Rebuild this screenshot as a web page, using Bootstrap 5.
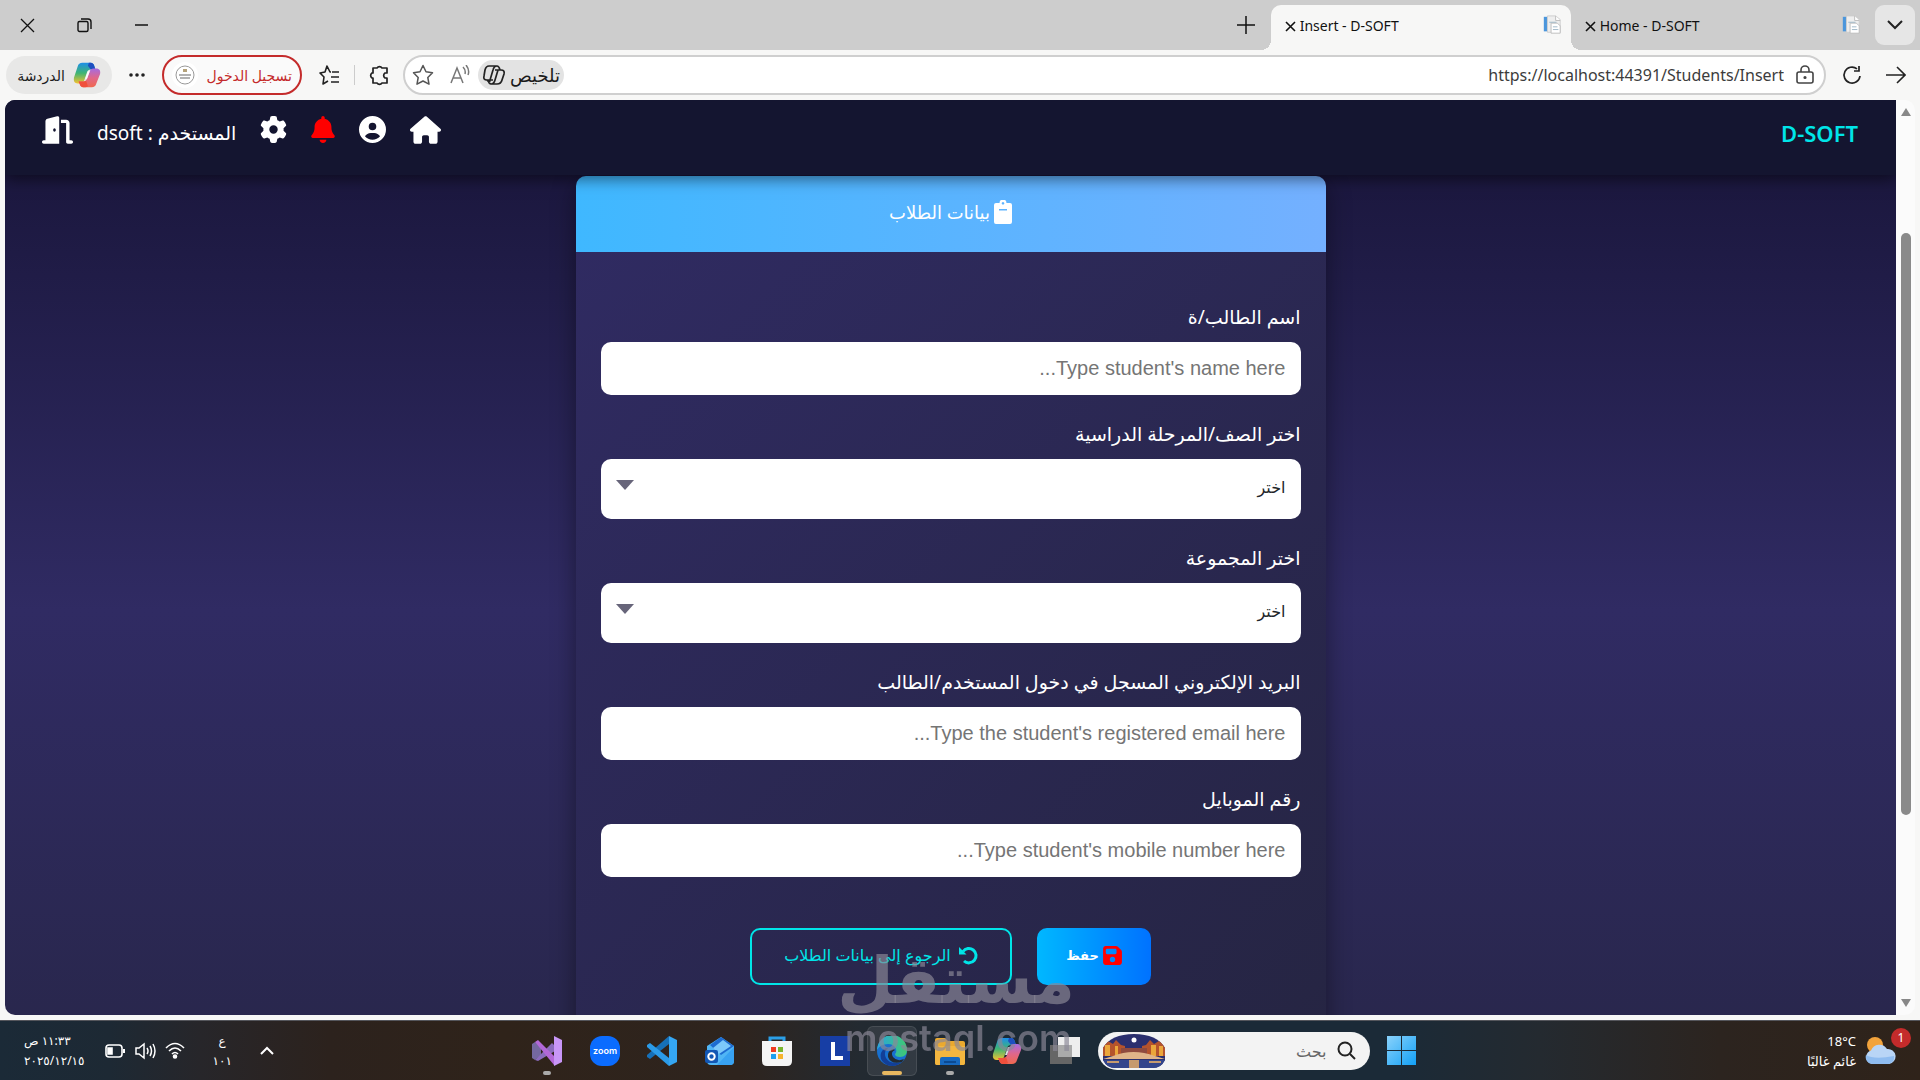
<!DOCTYPE html>
<html lang="ar" dir="rtl">
<head>
<meta charset="utf-8">
<meta name="viewport" content="width=device-width, initial-scale=1">
<title>Insert - D-SOFT</title>
<link href="https://cdn.jsdelivr.net/npm/bootstrap@5.3.0/dist/css/bootstrap.min.css" rel="stylesheet">
<style>
  :root { --ui: "Noto Sans", "DejaVu Sans", sans-serif; --cyan: #00e5e8; }
  body { font-family: var(--ui); height: 100vh; overflow: hidden; background: #f7f7f6; color: #1b1b1b; }
  svg { display: block; flex: none; }
  button { font-family: inherit; }
  .plain { background: none; border: 0; padding: 0; color: inherit; }

  /* tab strip */
  .tabstrip { height: 50px; background: #cdcdcd; padding-inline: 5px 20px; }
  .tab-item { width: 304px; height: 40px; font-size: 14px; padding-inline: 14px; color: #111; }
  .tab-on { width: 300px; height: 45px; background: #f7f7f6; border-radius: 10px 10px 0 0; margin-top: 5px; padding-inline: 9px 14px; padding-bottom: 5px; position: relative; }
  .tab-on::before, .tab-on::after { content: ""; position: absolute; bottom: 0; width: 10px; height: 10px; }
  .tab-on::before { left: -10px; background: radial-gradient(circle at 0 0, transparent 10px, #f7f7f6 10px); }
  .tab-on::after { right: -10px; background: radial-gradient(circle at 100% 0, transparent 10px, #f7f7f6 10px); }
  .tab-menu { width: 40px; height: 40px; border-radius: 9px; background: #e6e6e6; }
  .win-ctl { gap: 42px; }

  /* address row */
  .toolrow { height: 50px; padding-inline: 14px 6px; }
  .omni { height: 40px; margin-left: 14px; border: 2px solid #cfcfcf; border-radius: 20px; background: #fff; padding-inline: 10px 7px; }
  .omni input { border: 0; outline: 0; background: none; font: 16px/24px var(--ui); color: #3c3c3c; min-width: 0; text-align: right; margin-right: 10px; }
  .sum-pill { height: 30px; border-radius: 15px; background: #e3e3e3; padding-inline: 4px; font-size: 18px; }
  .login-pill { width: 140px; height: 40px; border: 2px solid #c42b2b; border-radius: 20px; color: #c42b2b; font-size: 14px; background: #fafafa; }
  .login-pic { width: 26px; height: 26px; border-radius: 50%; background: #fff; }
  .chat-pill { width: 106px; height: 38px; border-radius: 19px; background: #e8e8e7; font-size: 14px; }
  .v-rule { width: 1px; height: 20px; background: #ccc; margin-inline: 14px; }

  /* web page */
  .view-wrap { min-height: 0; padding: 0 5px 5px; }
  .view { border-radius: 0 0 0 10px; border-top-left-radius: 10px; overflow: hidden; background: linear-gradient(#0f0c29, #302b63, #24243e) 0 -183px / 100% 1388px no-repeat; }
  .topnav { height: 75px; background: #141530; padding: 16px 38px 0 37px; box-shadow: 0 4px 14px rgba(0,0,0,.5); position: relative; z-index: 2; color: #fff; align-items: flex-start; }
  .brand { color: var(--cyan); font: 600 22px/34px "Noto Sans", sans-serif; text-decoration: none; }
  .topnav a svg { fill: #fff; }
  .topnav a.alerts svg { fill: #f00; }
  .who { font-size: 19px; line-height: 34px; }
  .form-panel { width: 750px; max-width: 100%; min-height: 1100px; margin-top: 1px; border-radius: 10px; background: linear-gradient(135deg, #302b63, #24243e); box-shadow: 0 8px 25px rgba(0,0,0,.4); }
  .panel-top { height: 76px; border-radius: 10px 10px 0 0; background: linear-gradient(90deg, #3fb8ff, #74b0ff); padding-top: 24px; color: #fff; font-size: 18px; line-height: 24px; }
  .panel-main { padding: 54px 25px 0; }
  .field { margin-bottom: 28px; }
  .field label { display: block; color: #fff; font-size: 19px; line-height: 22px; margin-bottom: 14px; }
  .field .form-control, .field .form-select { border: 0; border-radius: 10px; padding: 0 15px; background: #fff; color: #212529; }
  .field .form-control { height: 53px; font: 20px "Liberation Sans", sans-serif; }
  .field .form-control::placeholder { color: #757575; }
  .field .form-select { height: 60px; font-size: 16px; padding-bottom: 4px; }
  .pick { position: relative; }
  .pick::after { content: ""; position: absolute; left: 15px; top: 21px; border: 9px solid transparent; border-top: 10px solid #67657a; border-bottom: 0; pointer-events: none; }
  .act { height: 57px; border-radius: 10px; font-size: 16px; line-height: 24px; border: 0; padding-bottom: 4px; }
  .act-save { width: 114px; color: #fff; font-size: 13px; font-weight: 700; background: linear-gradient(90deg, #00b8ff, #0072ff); }
  .act-back { width: 262px; color: var(--cyan); border: 2px solid var(--cyan); background: none; }
  .act-row { margin-top: 51px; gap: 25px; }
  .sbar { width: 19px; background: #fbfbfb; border-radius: 0 10px 10px 0; padding: 8px 0; }
  .sbar-track { padding: 117px 0 0; }
  .sbar-thumb { width: 10px; height: 76%; border-radius: 5px; background: #8a8a8a; }

  /* taskbar */
  .taskrow { height: 60px; color: #fff; border-top: 1px solid #55565c; background: linear-gradient(90deg, #1b2a37 0, #1d2934 110px, #27262a 200px, #2c221d 330px, #2f231a 500px, #2e241e 740px, #232a31 860px, #1b2a37 1080px, #1b2a37 1400px, #242a30 1540px, #2c241f 1720px, #2f231a 1920px); }
  .weather { width: 504px; padding-inline-start: 24px; font-size: 13px; line-height: 20px; }
  .alert-dot { position: absolute; top: -7px; right: -15px; width: 20px; height: 20px; border-radius: 50%; background: #c42b2b; font-size: 12px; line-height: 20px; text-align: center; }
  .center-apps { width: 884px; }
  .app-list { width: 548px; }
  .searchbox { width: 272px; height: 38px; border-radius: 19px; background: #f3f3f3; padding-inline: 14px 5px; }
  .searchbox input { border: 0; outline: 0; background: none; font-size: 16px; min-width: 0; }
  .searchbox input::placeholder { color: #666; }
  .app { position: relative; width: 30px; height: 30px; }
  .app.run::after { content: ""; position: absolute; left: 11px; bottom: -9px; width: 8px; height: 4px; border-radius: 2px; background: #aaa; }
  .app.active::after { left: 5px; width: 20px; background: #e8b860; }
  .app.active::before { content: ""; position: absolute; inset: -10px; border-radius: 6px; background: rgba(255,255,255,.08); border: 1px solid rgba(255,255,255,.1); }
  .app svg { position: relative; }
  .tray { padding-inline-end: 24px; font-size: 12px; line-height: 20px; }
  .tray-sys { gap: 9px; }

  /* watermark over the page */
  .wmark { position: fixed; left: 845px; top: 943px; width: 230px; color: rgba(138,136,150,.68); pointer-events: none; z-index: 9; }
  .wmark-ar { font: 700 65px/76px "DejaVu Sans", sans-serif; }
  .wmark-en { font: 600 36px/38px "Inter", sans-serif; }
</style>
<script src="https://cdn.jsdelivr.net/npm/bootstrap@5.3.0/dist/js/bootstrap.bundle.min.js"></script>
</head>
<body class="d-flex flex-column">

<!-- shared shapes -->
<svg width="0" height="0" class="position-absolute" aria-hidden="true">
  <defs>
    <linearGradient id="cp1" x1="0" y1="0" x2="0" y2="1"><stop offset="0" stop-color="#1e8fe8"/><stop offset=".5" stop-color="#3fb573"/><stop offset="1" stop-color="#f3c130"/></linearGradient>
    <linearGradient id="cp2" x1="0" y1="0" x2="0" y2="1"><stop offset="0" stop-color="#a56be0"/><stop offset=".5" stop-color="#e0678a"/><stop offset="1" stop-color="#f0684f"/></linearGradient>
    <symbol id="copilot" viewBox="0 0 30 30">
      <path d="M10 2h9q3 0 4 4l1 3h-5q-3 0-4 3l-3 9q-1 3-4 3H5q-5 0-4-6L5 6q1-4 5-4z" fill="url(#cp1)"/>
      <path d="M17 2h2q3 0 4 4l1 3h-5l-3-4z" fill="#1d4fc0"/>
      <path d="M20 28h-9q-3 0-4-4l-1-2h5q3 0 4-3l3-8q1-3 4-3h4q4 1 3 6l-4 10q-1 4-5 4z" fill="url(#cp2)"/>
      <path d="M6 22h5q2 0 3-1l2 6q-1 1-3 1h-2q-3 0-4-4z" fill="#f0503c"/>
      <path d="M13 19l3-8h2l-3 8z" fill="#fff" opacity=".85"/>
    </symbol>
    <symbol id="docs" viewBox="0 0 22 22">
      <path d="M2 2h4v16H2z" fill="#4b96dc"/><path d="M6 1h9l5 4v14H6z" fill="#eee" stroke="#ccc"/><path d="M15 1v5h5" fill="#fff" stroke="#bbb"/><path d="M10 9h7l3 3v8H10z" fill="#fff" stroke="#bbb"/><path d="M8 8h8M12 13h5M12 16h6" stroke="#9ab4c4" fill="none"/>
    </symbol>
  </defs>
</svg>

<header class="flex-shrink-0">
  <div class="tabstrip d-flex align-items-center">
    <button class="plain tab-menu d-flex align-items-center justify-content-center" aria-label="Tabs"><svg width="16" height="10" fill="none" stroke="#222" stroke-width="2"><path d="M1 1l7 7 7-7"/></svg></button>
    <div class="tab-item d-flex align-items-center justify-content-between">
      <svg width="20" height="20"><use href="#docs"/></svg>
      <span dir="ltr"><button class="plain" aria-label="Close"><svg class="d-inline-block" width="11" height="11" stroke="#111" stroke-width="1.6"><path d="M1 1l9 9M10 1l-9 9"/></svg></button> Home - D-SOFT</span>
    </div>
    <div class="tab-item tab-on d-flex align-items-center justify-content-between">
      <svg width="20" height="20"><use href="#docs"/></svg>
      <span dir="ltr"><button class="plain" aria-label="Close"><svg class="d-inline-block" width="11" height="11" stroke="#111" stroke-width="1.6"><path d="M1 1l9 9M10 1l-9 9"/></svg></button> Insert - D-SOFT</span>
    </div>
    <button class="plain me-3" aria-label="New tab"><svg width="18" height="18" stroke="#111" stroke-width="1.5"><path d="M9 0v18M0 9h18"/></svg></button>
    <div class="win-ctl d-flex align-items-center me-auto">
      <button class="plain" aria-label="Minimize"><svg width="15" height="15" stroke="#111" stroke-width="1.5"><path d="M1 7h13"/></svg></button>
      <button class="plain" aria-label="Restore"><svg width="15" height="15" fill="none" stroke="#111" stroke-width="1.4"><rect x="1" y="3.500" width="10" height="10" rx="1.500"/><path d="M4 1h7q3 0 3 3v7"/></svg></button>
      <button class="plain" aria-label="Close"><svg width="15" height="15" stroke="#111" stroke-width="1.3"><path d="M1 1l13 13M14 1L1 14"/></svg></button>
    </div>
  </div>

  <div class="toolrow d-flex align-items-center">
    <button class="plain" aria-label="Forward"><svg width="20" height="18" fill="none" stroke="#222" stroke-width="1.6"><path d="M0 9h19M11 1l8 8-8 8"/></svg></button>
    <button class="plain me-4" aria-label="Reload"><svg width="20" height="20" fill="none" stroke="#222" stroke-width="1.7"><path d="M18 11a8 8 0 1 1-3-7.200M17 1v5h-5"/></svg></button>
    <div class="omni d-flex align-items-center flex-grow-1 me-3">
      <svg width="18" height="20" fill="none" stroke="#444" stroke-width="1.6"><rect x="1" y="7" width="16" height="11" rx="2"/><path d="M5 7V5a4 4 0 0 1 8 0v2"/><circle cx="9" cy="12.500" r=".8" fill="#444"/></svg>
      <input class="flex-grow-1" dir="ltr" type="text" aria-label="Address" value="https://localhost:44391/Students/Insert">
      <button class="plain sum-pill d-flex align-items-center gap-1">تلخيص
        <svg width="24" height="22" fill="none" stroke="#222" stroke-width="1.7"><path d="M7 2h8q2 0 3 4l1 0q4 0 3 4l-2 6q-1 4-5 4H9q-2 0-3-4H5q-4 0-3-4l1-6q1-4 4-4zM15 2q-3 0-4 4L8 16q0 4-3 0M9 20q3 0 4-4l3-10h3M13 6h4M6 16h5"/></svg></button>
      <svg class="me-2" width="20" height="20" fill="none" stroke="#777" stroke-width="1.500"><path d="M1 18L7 3l6 15M3 13h8M13 2q3 3 2 7M16 0q4 5 2 10"/></svg>
      <svg class="me-3" width="22" height="22" fill="none" stroke="#555" stroke-width="1.500" stroke-linejoin="round"><path d="M11 1.500l3 6.300 6.500 1-4.700 4.700 1.200 6.700-6-3.200-6 3.200 1.200-6.700L1.500 8.800l6.500-1z"/></svg>
    </div>
    <svg width="20" height="22" fill="none" stroke="#222" stroke-width="1.700" stroke-linejoin="round"><path d="M4 4h4a3 3 0 0 1 5 0h5v5h-2a3 3 0 0 0 0 5h2v5h-5a3 3 0 0 1-5 0H4v-5h-1a3 3 0 0 1 0-5h1z"/></svg>
    <span class="v-rule"></span>
    <svg width="22" height="22" fill="none" stroke="#222" stroke-width="1.600" stroke-linejoin="round"><path d="M13 8h-1L9 2 7 8l-5 1 4 4-1 7 5-3M14 8h7M13 13h8M13 18h8"/></svg>
    <button class="plain login-pill d-flex align-items-center justify-content-between me-3 ps-2 pe-2">
      <span>تسجيل الدخول</span>
      <span class="login-pic d-flex align-items-center justify-content-center"><svg width="20" height="20" fill="none" stroke="#999"><circle cx="10" cy="10" r="9"/><path d="M4 10h12M5 13h10" stroke-width="1.600"/><path d="M8 4h4v3H8z" fill="#b5a27a" stroke="none"/></svg></span>
    </button>
    <button class="plain me-3" aria-label="More"><svg width="18" height="6" fill="#222"><circle cx="3" cy="3" r="1.800"/><circle cx="9" cy="3" r="1.800"/><circle cx="15" cy="3" r="1.800"/></svg></button>
    <button class="plain chat-pill d-flex align-items-center justify-content-center gap-2 me-3"><svg width="28" height="28"><use href="#copilot"/></svg>الدردشة</button>
  </div>
</header>

<div class="view-wrap d-flex flex-grow-1">
  <div class="sbar d-flex flex-column align-items-center">
    <svg width="10" height="8" fill="#888"><path d="M5 0l5 8H0z"/></svg>
    <div class="sbar-track flex-grow-1"><div class="sbar-thumb"></div></div>
    <svg width="10" height="8" fill="#888"><path d="M5 8L0 0h10z"/></svg>
  </div>
  <main class="view flex-grow-1">
    <nav class="topnav d-flex justify-content-between">
      <a class="brand" href="#" dir="ltr">D-SOFT</a>
      <div class="d-flex align-items-start gap-4">
        <a href="#" aria-label="الرئيسية"><svg width="31" height="28" viewBox="0 0 576 512"><path d="M575.800 255.500c0 18-15 32.100-32 32.100h-32l.7 160.200c0 2.700-.2 5.400-.5 8.100V472c0 22.100-17.900 40-40 40H392c-22.100 0-40-17.900-40-40V384c0-17.700-14.300-32-32-32H256c-17.700 0-32 14.300-32 32v88c0 22.100-17.900 40-40 40H104c-22.100 0-40-17.900-40-40V287.600H32c-18 0-32-14-32-32.100c0-9 3-17 10-24L266.400 8c7-7 15-8 22-8s15 2 21 7L564.800 231.500c8 7 12 15 11 24z"/></svg></a>
        <a href="#" aria-label="الحساب"><svg width="27" height="27" viewBox="0 0 512 512"><path fill-rule="evenodd" d="M399 384.200C376.900 345.800 335.400 320 288 320H224c-47.400 0-88.900 25.800-111 64.200c35.200 39.200 86.200 63.800 143 63.800s107.800-24.700 143-63.800zM0 256a256 256 0 1 1 512 0A256 256 0 1 1 0 256zm256 16a72 72 0 1 0 0-144 72 72 0 1 0 0 144z"/></svg></a>
        <a class="alerts" href="#" aria-label="التنبيهات"><svg width="24" height="27" viewBox="0 0 448 512"><path d="M224 0c-17.700 0-32 14.300-32 32V51.200C119 66 64 130.600 64 208v18.800c0 47-17.300 92.400-48.500 127.600l-7.400 8.300c-8.400 9.400-10.400 22.900-5.300 34.400S19.400 416 32 416H416c12.600 0 24-7.400 29.200-18.900s3.100-25-5.300-34.400l-7.400-8.300C401.300 319.200 384 273.900 384 226.800V208c0-77.400-55-142-128-156.800V32c0-17.700-14.300-32-32-32zm45.300 493.300c12-12 18.700-28.300 18.700-45.300H160c0 17 6.700 33.300 18.700 45.300s28.300 18.700 45.300 18.700s33.300-6.700 45.300-18.700z"/></svg></a>
        <a href="#" aria-label="الإعدادات"><svg width="27" height="27" viewBox="0 0 512 512"><path fill-rule="evenodd" d="M495.900 166.600c3.200 8.700 .5 18.400-6.400 24.600l-43.300 39.400c1.100 8.300 1.700 16.800 1.700 25.400s-.6 17.100-1.700 25.400l43.300 39.400c6.900 6.200 9.600 15.900 6.400 24.600c-4.400 11.900-9.700 23.300-15.800 34.300l-4.700 8.100c-6.600 11-14 21.400-22.100 31.200c-5.900 7.200-15.700 9.600-24.500 6.800l-55.700-17.700c-13.400 10.300-28.200 18.900-44 25.400l-12.500 57.100c-2 9.100-9 16.300-18.200 17.800c-13.800 2.300-28 3.500-42.500 3.500s-28.700-1.200-42.500-3.500c-9.200-1.500-16.200-8.700-18.200-17.800l-12.500-57.100c-15.800-6.500-30.600-15.100-44-25.400L83.100 425.900c-8.800 2.800-18.600 .3-24.500-6.800c-8.100-9.800-15.500-20.200-22.100-31.200l-4.700-8.100c-6.100-11-11.400-22.400-15.800-34.300c-3.200-8.700-.5-18.400 6.400-24.600l43.300-39.400C64.600 273.100 64 264.600 64 256s.6-17.100 1.700-25.400L22.400 191.200c-6.900-6.200-9.600-15.900-6.400-24.600c4.400-11.900 9.700-23.300 15.800-34.300l4.700-8.100c6.600-11 14-21.400 22.100-31.200c5.900-7.200 15.700-9.600 24.500-6.800l55.700 17.700c13.400-10.300 28.200-18.900 44-25.400l12.500-57.100c2-9.100 9-16.300 18.200-17.800C227.300 1.200 241.500 0 256 0s28.700 1.200 42.500 3.500c9.200 1.500 16.200 8.700 18.200 17.800l12.500 57.100c15.800 6.500 30.600 15.100 44 25.400l55.700-17.700c8.800-2.800 18.600-.3 24.500 6.800c8.100 9.800 15.500 20.200 22.100 31.200l4.700 8.100c6.100 11 11.400 22.400 15.800 34.300zM256 336a80 80 0 1 0 0-160 80 80 0 1 0 0 160z"/></svg></a>
        <span class="who">المستخدم : dsoft</span>
        <a href="#" aria-label="خروج"><svg width="31" height="28" viewBox="0 0 576 512"><path fill-rule="evenodd" d="M320 32c0-9.900-4.500-19.200-12.300-25.200S289.800-1.400 280.200 1l-179.900 45C79 51.300 64 70.500 64 92.500V448H32c-17.700 0-32 14.300-32 32s14.300 32 32 32H320V32zM256 256c0 17.700-10.700 32-24 32s-24-14.300-24-32s10.700-32 24-32s24 14.300 24 32zm96-128h96V480c0 17.700 14.300 32 32 32h64c17.700 0 32-14.300 32-32s-14.300-32-32-32H512V128c0-35.300-28.700-64-64-64H352v64z"/></svg></a>
      </div>
    </nav>

    <section class="form-panel mx-auto">
      <div class="panel-top d-flex justify-content-center align-items-start">
        <svg class="ms-1" width="18" height="24" fill="#fff"><path fill-rule="evenodd" d="M2 3h3.500a3.500 3.500 0 0 1 7 0H16q2 0 2 2v17q0 2-2 2H2q-2 0-2-2V5q0-2 2-2zm7-1a1.300 1.300 0 1 0 .01 0zM5 9v1.500h8V9z"/></svg>
        <span>بيانات الطلاب</span>
      </div>
      <form class="panel-main" onsubmit="return false">
        <div class="field"><label for="sname">اسم الطالب/ة</label><input id="sname" class="form-control" type="text" placeholder="Type student's name here..."></div>
        <div class="field"><label for="sgrade">اختر الصف/المرحلة الدراسية</label><div class="pick"><select id="sgrade" class="form-select"><option>اختر</option></select></div></div>
        <div class="field"><label for="sgroup">اختر المجموعة</label><div class="pick"><select id="sgroup" class="form-select"><option>اختر</option></select></div></div>
        <div class="field"><label for="smail">البريد الإلكتروني المسجل في دخول المستخدم/الطالب</label><input id="smail" class="form-control" type="text" placeholder="Type the student's registered email here..."></div>
        <div class="field"><label for="sphone">رقم الموبايل</label><input id="sphone" class="form-control" type="text" placeholder="Type student's mobile number here..."></div>
        <div class="act-row d-flex justify-content-center">
          <button class="act act-save d-flex align-items-center justify-content-center gap-1" type="submit"><svg width="19" height="19" viewBox="0 30 448 452" fill="#f00"><path fill-rule="evenodd" d="M64 32C28.700 32 0 60.700 0 96V416c0 35.300 28.700 64 64 64H384c35.300 0 64-28.700 64-64V173.300c0-17-6.700-33.300-18.700-45.300L352 50.700C340 38.700 323.700 32 306.700 32H64zm0 96c0-17.700 14.300-32 32-32H288c17.700 0 32 14.300 32 32v64c0 17.700-14.300 32-32 32H96c-17.700 0-32-14.300-32-32V128zM224 288a64 64 0 1 1 0 128 64 64 0 1 1 0-128z"/></svg>حفظ</button>
          <button class="act act-back d-flex align-items-center justify-content-center gap-2" type="button"><svg width="19" height="19" fill="none" stroke="#00e5e8" stroke-width="3"><path d="M4 5.500a7.200 7.200 0 1 1 1 9.500"/><path d="M0 1v7.500h7.500z" fill="#00e5e8" stroke="none"/></svg>الرجوع إلى بيانات الطلاب</button>
        </div>
      </form>
    </section>
  </main>
</div>

<footer class="taskrow d-flex align-items-center flex-shrink-0">
  <div class="weather d-flex align-items-center gap-2 flex-shrink-0">
    <div class="position-relative"><svg width="32" height="32"><circle cx="11" cy="10" r="8" fill="#f2a33c"/><path d="M8 29a7 7 0 0 1-1-13.500A9 9 0 0 1 23 14a7.500 7.500 0 0 1 2 15z" fill="#b9d5f6"/><path d="M8 29a7 7 0 0 1-6-9q8 5 28 1a7.500 7.500 0 0 1-5 8z" fill="#8fbcf0"/></svg><span class="alert-dot">1</span></div>
    <div class="text-end d-flex flex-column" dir="ltr"><span>18°C</span><span dir="rtl">غائم غالبًا</span></div>
  </div>
  <div class="center-apps d-flex align-items-center justify-content-between flex-shrink-0">
    <button class="plain" aria-label="Start"><svg width="29" height="29"><defs><linearGradient id="wn" x1="0" y1="0" x2="1" y2="1"><stop offset="0" stop-color="#8ad2fb"/><stop offset="1" stop-color="#12a0f6"/></linearGradient></defs><path d="M0 0h14v14H0zM15 0h14v14H15zM0 15h14v14H0zM15 15h14v14H15z" fill="url(#wn)"/></svg></button>
    <div class="searchbox d-flex align-items-center gap-2">
      <svg width="19" height="19" fill="none" stroke="#222" stroke-width="2"><circle cx="8" cy="8" r="6.500"/><path d="M13 13l5 5"/></svg>
      <input class="flex-grow-1" type="text" aria-label="بحث" placeholder="بحث">
      <svg width="62" height="34"><defs><clipPath id="oval"><path d="M0 14Q8 0 31 0t31 14v12q-4 8-12 8H12Q4 34 0 26z"/></clipPath></defs><g clip-path="url(#oval)"><path d="M0 0h62v34H0z" fill="#2b2f6e"/><path d="M0 9l5-2 5 3 3-4 5 5 4 1v10H0zM62 9l-6-2-5 3-4-4-4 5-4 1v10h23z" fill="#b5532c"/><path d="M2 11h5v11H2zM12 12h3v10h-3zM48 11h5v11h-5zM56 12h4v10h-4z" fill="#eba63b"/><path d="M18 14h26v8H18z" fill="#8f4a3e"/><path d="M10 22q20-8 42 0l10 3H0z" fill="#e0b489"/><path d="M0 26h62v8H0z" fill="#33458c"/><path d="M4 27h12v2H4zM46 27h12v2H46zM26 26h10v8H26z" fill="#c69a6e"/><circle cx="31" cy="6" r="2.500" fill="#fff"/></g></svg>
    </div>
    <div class="app-list d-flex justify-content-between">
      <a class="app" href="#" aria-label="Task view"><svg width="30" height="30"><path d="M0 9h22v19H0z" fill="#666"/><path d="M8 1h22v20H8z" fill="#eee"/><path d="M8 9h14v12H8z" fill="#aaa"/></svg></a>
      <a class="app" href="#" aria-label="Copilot"><svg width="30" height="30"><use href="#copilot"/></svg></a>
      <a class="app run" href="#" aria-label="Files"><svg width="30" height="30"><path d="M0 4q0-2 2-2h8l3 3h15q2 0 2 2v20q0 2-2 2H2q-2 0-2-2z" fill="#eaa92f"/><path d="M0 10h30v16q0 3-2 3H2q-2 0-2-3z" fill="#f3b63f"/><path d="M5 29v-6q0-2 2-2h16q2 0 2 2v6z" fill="#1769c0"/><path d="M9 25h12v2H9z" fill="#0b4a93"/></svg></a>
      <a class="app active run" href="#" aria-label="Edge"><svg width="30" height="30"><defs><linearGradient id="eg" x1="0" x2="1"><stop offset="0" stop-color="#2aa5de"/><stop offset="1" stop-color="#3fca72"/></linearGradient></defs><circle cx="15" cy="15" r="15" fill="#1870cf"/><path d="M0 14A15 15 0 0 1 30 14q0 7-7 7-5 0-5-3 2-2 1-5-2-5-8-5Q3 8 0 14z" fill="url(#eg)"/><path d="M11 12q-5 4-2 10 4 7 16 4-7 6-15 3Q2 25 4 17q2-5 7-5z" fill="#123f97"/><path d="M18 14q-5 2-2 7 4 5 11 2l-2 3Q14 29 11 21q-1-6 5-8z" fill="#232a31"/></svg></a>
      <a class="app" href="#" aria-label="L"><svg width="30" height="30"><path d="M0 0h30v30H0z" fill="#173ea5"/><path d="M11 6h4v14h8v4H11z" fill="#fff"/></svg></a>
      <a class="app" href="#" aria-label="Store"><svg width="30" height="30"><path d="M8 7V2h14v5" fill="none" stroke="#2b9fe8" stroke-width="3"/><path d="M0 5h30v20q0 5-5 5H5q-5 0-5-5z" fill="#f4f4f4"/><path d="M9 11h5v5H9z" fill="#f03a20"/><path d="M16 11h5v5h-5z" fill="#79b52d"/><path d="M9 18h5v5H9z" fill="#1c9ff0"/><path d="M16 18h5v5h-5z" fill="#f5b32d"/></svg></a>
      <a class="app" href="#" aria-label="Outlook"><svg width="30" height="30"><path d="M2 10L16 1l13 9v15q0 4-4 4H6q-4 0-4-4z" fill="#50b5f5"/><path d="M5 9l11-8 13 9-13 9z" fill="#1d6bd0"/><path d="M8 12l10-8 8 6-12 8z" fill="#7cc8fa"/><path d="M29 11v14q0 4-4 4H12z" fill="#38a2f2"/><rect y="14" width="13" height="13" rx="2" fill="#1257b5"/><circle cx="6.500" cy="20.500" r="3.200" fill="none" stroke="#fff" stroke-width="2"/></svg></a>
      <a class="app" href="#" aria-label="VS Code"><svg width="30" height="30"><path d="M22 0v8L3 23l-3-2v-2z" fill="#1670b8"/><path d="M3 7L0 9v2l22 19v-8z" fill="#2b9be8"/><path d="M22 0l8 4v22l-8 4z" fill="#35a6f2"/></svg></a>
      <a class="app" href="#" aria-label="Zoom"><svg width="30" height="30"><rect width="30" height="30" rx="12" fill="#0b6cff"/><text x="15" y="18" text-anchor="middle" font-family="Inter, sans-serif" font-size="9" font-weight="600" fill="#fff" direction="ltr">zoom</text></svg></a>
      <a class="app run" href="#" aria-label="Visual Studio"><svg width="30" height="30"><path d="M0 8l3-2 6 5v8l-6 5-3-2z" fill="#7468a0"/><path d="M3 24L20 7l3 3v5L6 25z" fill="#8a6bbd"/><path d="M3 6l3-2 16 16v9z" fill="#b268d8"/><path d="M22 0l8 4v22l-8 4z" fill="#c896f8"/></svg></a>
    </div>
  </div>
  <div class="tray d-flex align-items-center flex-grow-1">
    <svg class="me-auto" width="14" height="9" fill="none" stroke="#fff" stroke-width="2"><path d="M1 8l6-6 6 6"/></svg>
    <div class="d-flex flex-column text-center mx-4 px-1"><span>ع</span><span>١٠١</span></div>
    <div class="tray-sys d-flex align-items-center ms-3">
      <svg width="20" height="17" fill="none" stroke="#fff" stroke-width="1.600"><path d="M1 6q9-9 18 0M4 9q6-6 12 0M7 12q3-3 6 0"/><circle cx="10" cy="14.500" r="1.500" fill="#fff"/></svg>
      <svg width="21" height="18" fill="none" stroke="#fff" stroke-width="1.500"><path d="M1 6h3l5-4v14l-5-4H1zM12 6q2 3 0 6M15 4q3 5 0 10M18 2q4 7 0 14"/></svg>
      <svg width="21" height="14" fill="none" stroke="#fff" stroke-width="1.600"><rect x="1" y="1" width="16" height="12" rx="3"/><path d="M3 4h4v6H3z" fill="#fff"/><path d="M19 5v4" stroke-width="2"/></svg>
    </div>
    <div class="d-flex flex-column align-items-end me-1"><span>١١:٣٣ ص</span><span dir="ltr">٢٠٢٥/١٢/١٥</span></div>
  </div>
</footer>

<div class="wmark" aria-hidden="true"><div class="wmark-ar">مستقل</div><div class="wmark-en" dir="ltr">mostaql.com</div></div>
</body>
</html>
